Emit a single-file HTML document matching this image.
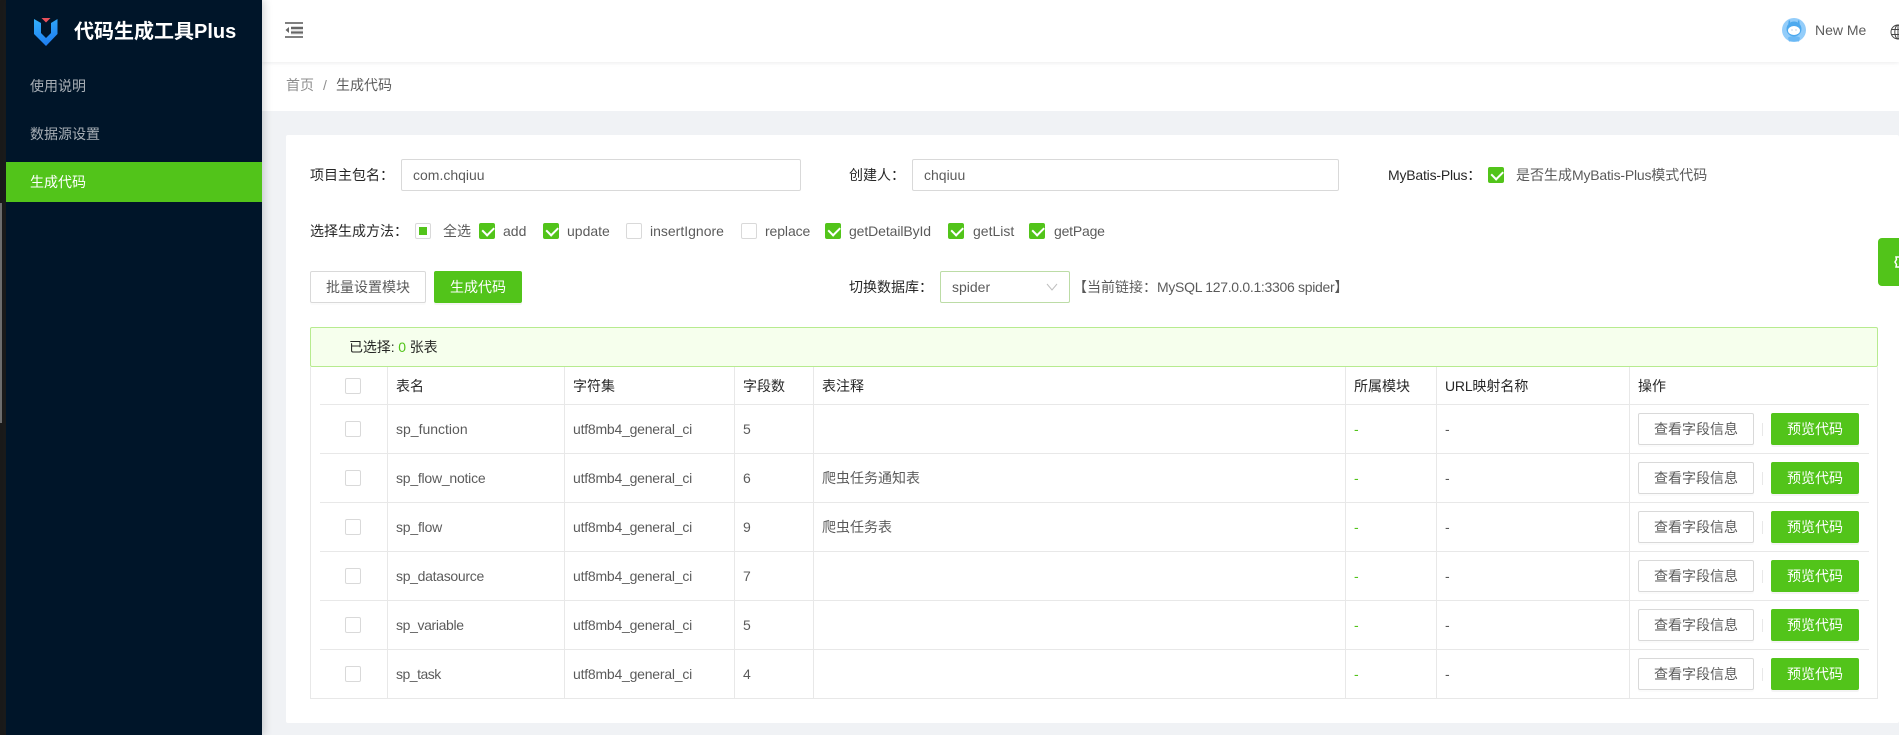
<!DOCTYPE html>
<html lang="zh-CN"><head><meta charset="utf-8"><title>代码生成工具Plus</title>
<style>
*{box-sizing:border-box}
html,body{margin:0;padding:0;width:1899px;height:735px;overflow:hidden;background:#f0f2f5;font-family:"Liberation Sans","Noto Sans CJK SC",sans-serif;font-size:14px;color:rgba(0,0,0,.65)}
.a{position:absolute}
.t{position:absolute;line-height:20px;height:20px;white-space:nowrap}
.d{color:rgba(0,0,0,.85)}
.cb{position:absolute;width:16px;height:16px;border:1px solid #d9d9d9;border-radius:2px;background:#fff}
.cb.c{background:#52c41a;border-color:#52c41a}
.cb.c:after{content:"";position:absolute;left:3px;top:7px;width:5.7px;height:9.1px;border:solid #fff;border-width:0 2px 2px 0;transform:rotate(45deg) translate(-50%,-50%)}
.btn{position:absolute;height:32px;line-height:30px;text-align:center;border:1px solid #d9d9d9;border-radius:2px;background:#fff;box-shadow:0 2px 0 rgba(0,0,0,.015);white-space:nowrap}
.btn.p{background:#52c41a;border-color:#52c41a;color:#fff;box-shadow:0 2px 0 rgba(0,0,0,.045)}
.inp{position:absolute;height:32px;border:1px solid #d9d9d9;border-radius:2px;background:#fff;line-height:30px;padding-left:11px}
.v{position:absolute;width:1px;background:#e8e8e8;top:367px;height:331px}
.h{position:absolute;height:1px;background:#e8e8e8;left:320px;width:1549px}
.u{letter-spacing:-.22px}
</style></head><body>

<div class="a" style="left:0;top:0;width:6px;height:735px;background:#1a1a1a"></div>
<div class="a" style="left:0;top:203px;width:2px;height:220px;background:#6e6e6e"></div>

<div class="a" style="left:6px;top:0;width:256px;height:735px;background:#001529;box-shadow:2px 0 8px rgba(29,35,41,.2);z-index:5">
  <svg class="a" style="left:27px;top:17px" width="26" height="30" viewBox="33 17 26 30">
    <defs><linearGradient id="g" x1="0" y1="0" x2="0.3" y2="1"><stop offset="0" stop-color="#33b0fa"/><stop offset="1" stop-color="#2080f2"/></linearGradient></defs>
    <path d="M34 19L41 23V33L46 38L51 33V23L57.500 19V34L46 46L34 34Z" fill="url(#g)"/>
    <path d="M41.500 18H50.500L46 22.500Z" fill="#e9505a"/>
  </svg>
  <div class="t" style="left:68px;top:20px;font-size:20px;line-height:24px;height:24px;font-weight:bold;color:#fff">代码生成工具Plus</div>
  <div class="t" style="left:24px;top:76px;color:rgba(255,255,255,.65)">使用说明</div>
  <div class="t" style="left:24px;top:124px;color:rgba(255,255,255,.65)">数据源设置</div>
  <div class="a" style="left:0;top:162px;width:256px;height:40px;background:#52c41a"></div>
  <div class="t" style="left:24px;top:172px;color:#fff">生成代码</div>
</div>

<div class="a" style="left:262px;top:0;width:1637px;height:62px;background:#fff;box-shadow:0 1px 4px rgba(0,21,41,.08);z-index:2">
  <svg class="a" style="left:23px;top:22px" width="18" height="16" viewBox="0 0 18 16">
    <rect x="0" y="0" width="18" height="2" fill="#808080"/>
    <rect x="0" y="14" width="18" height="2" fill="#808080"/>
    <rect x="6" y="4" width="12" height="4" fill="#d8d8d8"/>
    <rect x="6" y="8.500" width="12" height="4" fill="#d8d8d8"/>
    <rect x="6" y="5" width="12" height="2" fill="#666"/>
    <rect x="6" y="9.500" width="12" height="2" fill="#666"/>
    <path d="M0.500 8L4 5V11Z" fill="#666"/>
  </svg>
  <svg class="a" style="left:1520px;top:18px" width="24" height="24" viewBox="0 0 24 24">
    <circle cx="12" cy="12" r="12" fill="#93cdfa"/>
    <path d="M6 20C7 17.500 17 17.500 18 20L17 23.500H7Z" fill="#6bb8f4"/>
    <circle cx="12" cy="11" r="7.500" fill="#4da9ee"/>
    <ellipse cx="12" cy="12.500" rx="6" ry="4.500" fill="#fff"/>
    <path d="M7 6L7.500 2.500M17 6L16.500 2.500" stroke="#4da9ee" stroke-width="1.500"/>
    <circle cx="10" cy="12" r=".6" fill="#a0b8d0"/><circle cx="14" cy="12" r=".6" fill="#a0b8d0"/>
  </svg>
  <div class="t" style="left:1553px;top:20px;color:rgba(0,0,0,.65)">New Me</div>
  <svg class="a" style="left:1628px;top:24px" width="16" height="16" viewBox="0 0 16 16" fill="none" stroke="#444" stroke-width="1">
    <circle cx="8" cy="8" r="7"/><ellipse cx="8" cy="8" rx="3.200" ry="7"/><path d="M8 1V15M1.500 5.500H14.500M1.500 10.500H14.500"/>
  </svg>
</div>

<div class="a" style="left:262px;top:62px;width:1637px;height:49px;background:#fff"></div>
<div class="t" style="left:286px;top:75px;color:rgba(0,0,0,.45)">首页</div>
<div class="t" style="left:323px;top:75px;color:rgba(0,0,0,.45)">/</div>
<div class="t" style="left:336px;top:75px">生成代码</div>

<div class="a" style="left:286px;top:135px;width:1613px;height:588px;background:#fff;border-radius:2px"></div>

<div class="t d" style="left:310px;top:165px">项目主包名：</div>
<div class="inp" style="left:401px;top:159px;width:400px">com.chqiuu</div>
<div class="t d" style="left:849px;top:165px">创建人：</div>
<div class="inp" style="left:912px;top:159px;width:427px">chqiuu</div>
<div class="t d" style="left:1388px;top:165px"><span style="letter-spacing:-.2px">MyBatis-Plus</span>：</div>
<div class="cb c" style="left:1488px;top:167px"></div>
<div class="t" style="left:1516px;top:165px">是否生成<span style="letter-spacing:-.2px">MyBatis-Plus</span>模式代码</div>

<div class="t d" style="left:310px;top:221px">选择生成方法：</div>
<div class="cb" style="left:415px;top:223px"><div class="a" style="left:3px;top:3px;width:8px;height:8px;background:#52c41a"></div></div>
<div class="t" style="left:443px;top:221px">全选</div>
<div class="cb c" style="left:479px;top:223px"></div><div class="t" style="left:503px;top:221px">add</div>
<div class="cb c" style="left:543px;top:223px"></div><div class="t" style="left:567px;top:221px">update</div>
<div class="cb" style="left:626px;top:223px"></div><div class="t" style="left:650px;top:221px">insertIgnore</div>
<div class="cb" style="left:741px;top:223px"></div><div class="t" style="left:765px;top:221px;letter-spacing:-.1px">replace</div>
<div class="cb c" style="left:825px;top:223px"></div><div class="t" style="left:849px;top:221px;letter-spacing:-.1px">getDetailById</div>
<div class="cb c" style="left:948px;top:223px"></div><div class="t" style="left:973px;top:221px">getList</div>
<div class="cb c" style="left:1029px;top:223px"></div><div class="t" style="left:1054px;top:221px;letter-spacing:-.2px">getPage</div>

<div class="btn" style="left:310px;top:271px;width:116px">批量设置模块</div>
<div class="btn p" style="left:434px;top:271px;width:88px">生成代码</div>
<div class="t d" style="left:849px;top:277px">切换数据库：</div>
<div class="inp" style="left:940px;top:271px;width:130px;border-color:#bcdca6">spider</div>
<svg class="a" style="left:1046px;top:283px" width="12" height="8" viewBox="0 0 12 8" fill="none" stroke="#bfbfbf" stroke-width="1"><path d="M1 1L6 7L11 1"/></svg>
<div class="t" style="left:1073px;top:277px">【当前链接：<span style="letter-spacing:-.3px">MySQL 127.0.0.1:3306 spider</span>】</div>

<div class="a" style="left:1878px;top:238px;width:21px;height:48px;background:#52c41a;border-radius:4px 0 0 4px"></div>
<svg class="a" style="left:1894px;top:256px" width="5" height="12" viewBox="0 0 5 12" fill="none" stroke="#fff" stroke-width="1.500"><path d="M5 1H2L2.500 3.500L1 6L2.500 8.500L2 11H5"/></svg>

<div class="a" style="left:310px;top:327px;width:1568px;height:40px;background:#f6ffed;border:1px solid #b7eb8f;border-radius:2px"></div>
<div class="t d" style="left:349px;top:337px;letter-spacing:-.1px">已选择: <span style="color:#52c41a">0</span> 张表</div>

<div class="a" style="left:310px;top:367px;width:1px;height:332px;background:#e8e8e8"></div>
<div class="a" style="left:1877px;top:367px;width:1px;height:332px;background:#e8e8e8"></div>
<div class="a" style="left:310px;top:698px;width:1568px;height:1px;background:#e8e8e8"></div>
<div class="v" style="left:387px"></div><div class="v" style="left:564px"></div><div class="v" style="left:734px"></div><div class="v" style="left:813px"></div><div class="v" style="left:1345px"></div><div class="v" style="left:1436px"></div><div class="v" style="left:1629px"></div>
<div class="h" style="top:404px"></div><div class="h" style="top:453px"></div><div class="h" style="top:502px"></div><div class="h" style="top:551px"></div><div class="h" style="top:600px"></div><div class="h" style="top:649px"></div>

<div class="cb" style="left:345px;top:378px"></div>
<div class="t d" style="left:396px;top:376px">表名</div>
<div class="t d" style="left:573px;top:376px">字符集</div>
<div class="t d" style="left:743px;top:376px">字段数</div>
<div class="t d" style="left:822px;top:376px">表注释</div>
<div class="t d" style="left:1354px;top:376px">所属模块</div>
<div class="t d" style="left:1445px;top:376px"><span style="letter-spacing:-.2px">URL</span>映射名称</div>
<div class="t d" style="left:1638px;top:376px">操作</div>

<!-- row 1 -->
<div class="cb" style="left:345px;top:421px"></div>
<div class="t" style="left:396px;top:419px">sp_function</div><div class="t u" style="left:573px;top:419px">utf8mb4_general_ci</div><div class="t" style="left:743px;top:419px">5</div>
<div class="t" style="left:1354px;top:419px;color:#52c41a">-</div><div class="t" style="left:1445px;top:419px">-</div>
<div class="btn" style="left:1638px;top:413px;width:116px">查看字段信息</div><div class="a" style="left:1762px;top:423px;width:1px;height:13px;background:#e8e8e8"></div><div class="btn p" style="left:1771px;top:413px;width:88px">预览代码</div>
<!-- row 2 -->
<div class="cb" style="left:345px;top:470px"></div>
<div class="t" style="left:396px;top:468px;letter-spacing:-.23px">sp_flow_notice</div><div class="t u" style="left:573px;top:468px">utf8mb4_general_ci</div><div class="t" style="left:743px;top:468px">6</div><div class="t" style="left:822px;top:468px">爬虫任务通知表</div>
<div class="t" style="left:1354px;top:468px;color:#52c41a">-</div><div class="t" style="left:1445px;top:468px">-</div>
<div class="btn" style="left:1638px;top:462px;width:116px">查看字段信息</div><div class="a" style="left:1762px;top:472px;width:1px;height:13px;background:#e8e8e8"></div><div class="btn p" style="left:1771px;top:462px;width:88px">预览代码</div>
<!-- row 3 -->
<div class="cb" style="left:345px;top:519px"></div>
<div class="t" style="left:396px;top:517px;letter-spacing:-.2px">sp_flow</div><div class="t u" style="left:573px;top:517px">utf8mb4_general_ci</div><div class="t" style="left:743px;top:517px">9</div><div class="t" style="left:822px;top:517px">爬虫任务表</div>
<div class="t" style="left:1354px;top:517px;color:#52c41a">-</div><div class="t" style="left:1445px;top:517px">-</div>
<div class="btn" style="left:1638px;top:511px;width:116px">查看字段信息</div><div class="a" style="left:1762px;top:521px;width:1px;height:13px;background:#e8e8e8"></div><div class="btn p" style="left:1771px;top:511px;width:88px">预览代码</div>
<!-- row 4 -->
<div class="cb" style="left:345px;top:568px"></div>
<div class="t" style="left:396px;top:566px;letter-spacing:-.3px">sp_datasource</div><div class="t u" style="left:573px;top:566px">utf8mb4_general_ci</div><div class="t" style="left:743px;top:566px">7</div>
<div class="t" style="left:1354px;top:566px;color:#52c41a">-</div><div class="t" style="left:1445px;top:566px">-</div>
<div class="btn" style="left:1638px;top:560px;width:116px">查看字段信息</div><div class="a" style="left:1762px;top:570px;width:1px;height:13px;background:#e8e8e8"></div><div class="btn p" style="left:1771px;top:560px;width:88px">预览代码</div>
<!-- row 5 -->
<div class="cb" style="left:345px;top:617px"></div>
<div class="t" style="left:396px;top:615px;letter-spacing:-.36px">sp_variable</div><div class="t u" style="left:573px;top:615px">utf8mb4_general_ci</div><div class="t" style="left:743px;top:615px">5</div>
<div class="t" style="left:1354px;top:615px;color:#52c41a">-</div><div class="t" style="left:1445px;top:615px">-</div>
<div class="btn" style="left:1638px;top:609px;width:116px">查看字段信息</div><div class="a" style="left:1762px;top:619px;width:1px;height:13px;background:#e8e8e8"></div><div class="btn p" style="left:1771px;top:609px;width:88px">预览代码</div>
<!-- row 6 -->
<div class="cb" style="left:345px;top:666px"></div>
<div class="t" style="left:396px;top:664px;letter-spacing:-.5px">sp_task</div><div class="t u" style="left:573px;top:664px">utf8mb4_general_ci</div><div class="t" style="left:743px;top:664px">4</div>
<div class="t" style="left:1354px;top:664px;color:#52c41a">-</div><div class="t" style="left:1445px;top:664px">-</div>
<div class="btn" style="left:1638px;top:658px;width:116px">查看字段信息</div><div class="a" style="left:1762px;top:668px;width:1px;height:13px;background:#e8e8e8"></div><div class="btn p" style="left:1771px;top:658px;width:88px">预览代码</div>

</body></html>
